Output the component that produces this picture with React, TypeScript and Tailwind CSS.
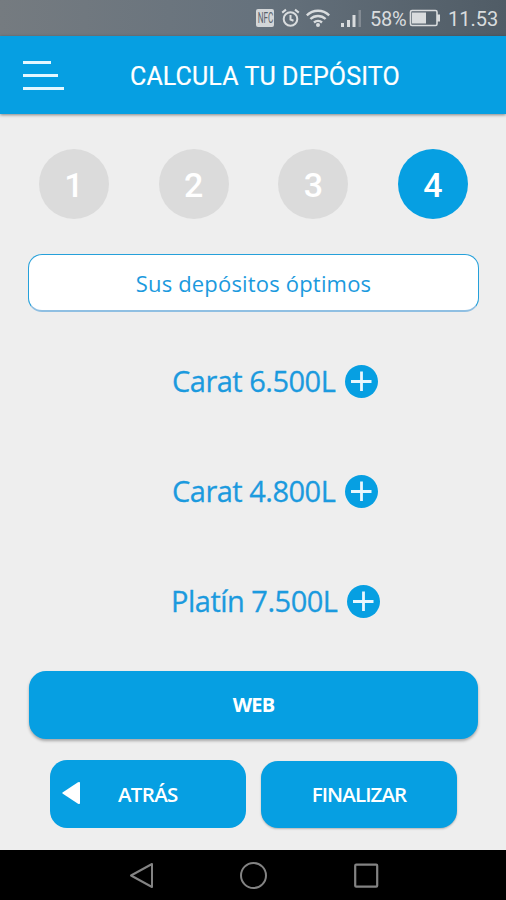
import React from "react";
import clsx from "clsx";

type Step = {
  label: string;
  active?: boolean;
};

type Deposit = {
  name: string;
  className: string;
};

const STEPS: Step[] = [
  { label: "1" },
  { label: "2" },
  { label: "3" },
  { label: "4", active: true },
];

const DEPOSITS: Deposit[] = [
  { name: "Carat 6.500L", className: "pl-[172px]" },
  { name: "Carat 4.800L", className: "pl-[172px]" },
  { name: "Platín 7.500L", className: "pl-[171px]" },
];

function StatusBar() {
  return (
    <div className="flex h-9 items-center bg-linear-to-r from-[#757b80] via-[#66727d] to-[#505c66] pl-[256px] font-['Roboto',sans-serif] text-[#d9dcde]">
      <span className="flex h-[18px] w-[18px] items-center justify-center rounded-[2px] bg-[#d3d6d8] text-[14px] leading-none text-[#59636c]">
        <span className="scale-x-[0.58]">NFC</span>
      </span>

      {/* Alarm */}
      <svg className="ml-[7px]" width="19" height="20" viewBox="0 0 19 20" fill="none" stroke="currentColor" strokeWidth="2" aria-hidden="true">
        <circle cx="9.5" cy="11" r="6.8" />
        <path d="M9.5 7v4.500l3 1.200M1.200 4.600 5 1.600M17.800 4.600 14 1.600" />
      </svg>

      {/* Wifi */}
      <svg className="ml-[6px]" width="24" height="18" viewBox="0 0 24 18" fill="none" stroke="currentColor" strokeWidth="2.400" aria-hidden="true">
        <path d="M.8 6.300a16 16 0 0 1 22.400 0M4.400 10a11 11 0 0 1 15.200 0M8 13.500a6 6 0 0 1 8 0" />
        <circle cx="12" cy="16" r="2" fill="currentColor" stroke="none" />
      </svg>

      {/* Signal */}
      <svg className="ml-[11px]" width="21" height="18" viewBox="0 0 21 18" fill="currentColor" aria-hidden="true">
        <path d="M0 14h3v4H0zM6 11h3v7H6zM11.500 6h3v12h-3z" />
        <path d="M17.500 1h2.500v17h-2.500z" opacity=".3" />
      </svg>

      <span className="ml-[8px] w-[39px] whitespace-nowrap pt-[2px] text-[20px] leading-9 tracking-[-0.3px]">58%</span>

      {/* Battery */}
      <svg width="31" height="18" viewBox="0 0 31 18" fill="none" aria-hidden="true">
        <rect x="1.500" y="1.500" width="26.500" height="15" rx="1.500" stroke="currentColor" strokeWidth="1.600" />
        <path d="M3 3.500h14v11H3zM28 5.500h3v7h-3z" fill="currentColor" />
      </svg>

      <span className="ml-[8px] whitespace-nowrap pt-[2px] text-[20px] leading-9">11.53</span>
    </div>
  );
}

function Header() {
  return (
    <header className="flex h-[78px] items-center bg-[#069fe2] pl-[23px] text-white shadow-[0_1px_3px_rgba(0,0,0,0.45)]">
      <button aria-label="Menu" className="flex w-[41px] flex-col gap-[10px]">
        <span className="h-[3px] w-[28px] bg-[#e4f7ff]" />
        <span className="h-[3px] w-[35px] bg-[#e4f7ff]" />
        <span className="h-[3px] w-[41px] bg-[#e4f7ff]" />
      </button>
      <h1 className="ml-[66px] whitespace-nowrap pt-[3px] font-['Roboto',sans-serif] text-[25px] leading-8 tracking-[0.12px] [-webkit-text-stroke:0.2px_currentColor]">
        CALCULA TU DEPÓSITO
      </h1>
    </header>
  );
}

function PlusIcon() {
  return (
    <svg width="33" height="33" viewBox="0 0 33 33" fill="none" aria-hidden="true">
      <circle cx="16.500" cy="16.500" r="16.500" fill="#069fe2" />
      <path d="M16.500 6.500v19.500M6 16.500h20.500" stroke="#e8f7fe" strokeWidth="2.800" />
    </svg>
  );
}

function NavBar() {
  return (
    <nav className="flex h-[50px] items-center bg-black pl-[129px] text-[#838383]">
      <svg width="25" height="28" viewBox="0 0 25 28" fill="none" stroke="currentColor" strokeWidth="2" strokeLinejoin="round" aria-hidden="true">
        <path d="M2 14.500 23 3v23z" />
      </svg>
      <svg className="ml-[85px]" width="29" height="29" viewBox="0 0 29 29" fill="none" stroke="currentColor" strokeWidth="2" aria-hidden="true">
        <circle cx="14.500" cy="14.500" r="12.500" />
      </svg>
      <svg className="ml-[85px]" width="26" height="26" viewBox="0 0 26 26" fill="none" stroke="currentColor" strokeWidth="2.200" aria-hidden="true">
        <rect x="2.200" y="2.700" width="22" height="22" rx="1" />
      </svg>
    </nav>
  );
}

export default function App() {
  return (
    <div className="flex h-[900px] w-[506px] flex-col overflow-hidden bg-[#eeeeee] font-['Open_Sans',sans-serif] text-[#1b9ade]">
      <StatusBar />
      <Header />

      <main className="flex flex-1 flex-col pt-[35px]">
        {/* Steps */}
        <div className="flex justify-between pl-[39px] pr-[38px]">
          {STEPS.map(({ label, active }) => (
            <div
              key={label}
              className={clsx(
                "flex size-[70px] items-center justify-center rounded-full pt-px font-['Roboto',sans-serif] text-[34px] font-medium leading-none text-white",
                active ? "bg-[#069fe2]" : "bg-[#dbdbdb]"
              )}
            >
              {label}
            </div>
          ))}
        </div>

        <div className="ml-[28px] mr-[27px] mt-[35px] flex h-[58px] items-center justify-center rounded-[14px] border-[1.500px] border-b-2 border-[#25a0da] border-b-[#8fbfe2] bg-white">
          <span className="whitespace-nowrap text-[22px] leading-8 tracking-[0.18px]">Sus depósitos óptimos</span>
        </div>

        {/* Deposits */}
        <div className="mt-[53px] flex flex-col gap-[77px]">
          {DEPOSITS.map(({ name, className }) => (
            <div key={name} className={clsx("flex h-[33px] items-center gap-[10px]", className)}>
              <span className="whitespace-nowrap pb-[2px] text-[29px] leading-[33px] tracking-[-0.5px] [-webkit-text-stroke:0.3px_currentColor]">
                {name}
              </span>
              <PlusIcon />
            </div>
          ))}
        </div>

        <button className="ml-[29px] mr-[28px] mt-[53px] h-[68px] shrink-0 rounded-[17px] bg-[#069fe2] text-[20px] font-bold tracking-[-0.8px] text-white shadow-[0_2px_3px_rgba(0,0,0,0.3)]">
          WEB
        </button>

        <div className="mt-[21px] flex gap-[15px] pl-[50px] font-semibold text-white">
          <button className="flex h-[68px] w-[196px] items-center rounded-[17px] bg-[#069fe2] pl-[12px] text-[20.500px] tracking-[-0.7px]">
            <svg className="relative -top-px" width="18" height="24" viewBox="0 0 18 24" fill="currentColor" aria-hidden="true">
              <path d="M.5 11.500Q0 12 .5 12.500L16 22.700Q18 23.800 18 22V2Q18 .2 16 1.300Z" />
            </svg>
            <span className="ml-[38px]">ATRÁS</span>
          </button>
          <button className="mt-px h-[67px] w-[196px] rounded-[17px] bg-[#069fe2] pb-px text-[20.500px] tracking-[-0.9px] shadow-[0_1px_2px_rgba(0,0,0,0.25)]">
            FINALIZAR
          </button>
        </div>
      </main>

      <NavBar />
    </div>
  );
}
